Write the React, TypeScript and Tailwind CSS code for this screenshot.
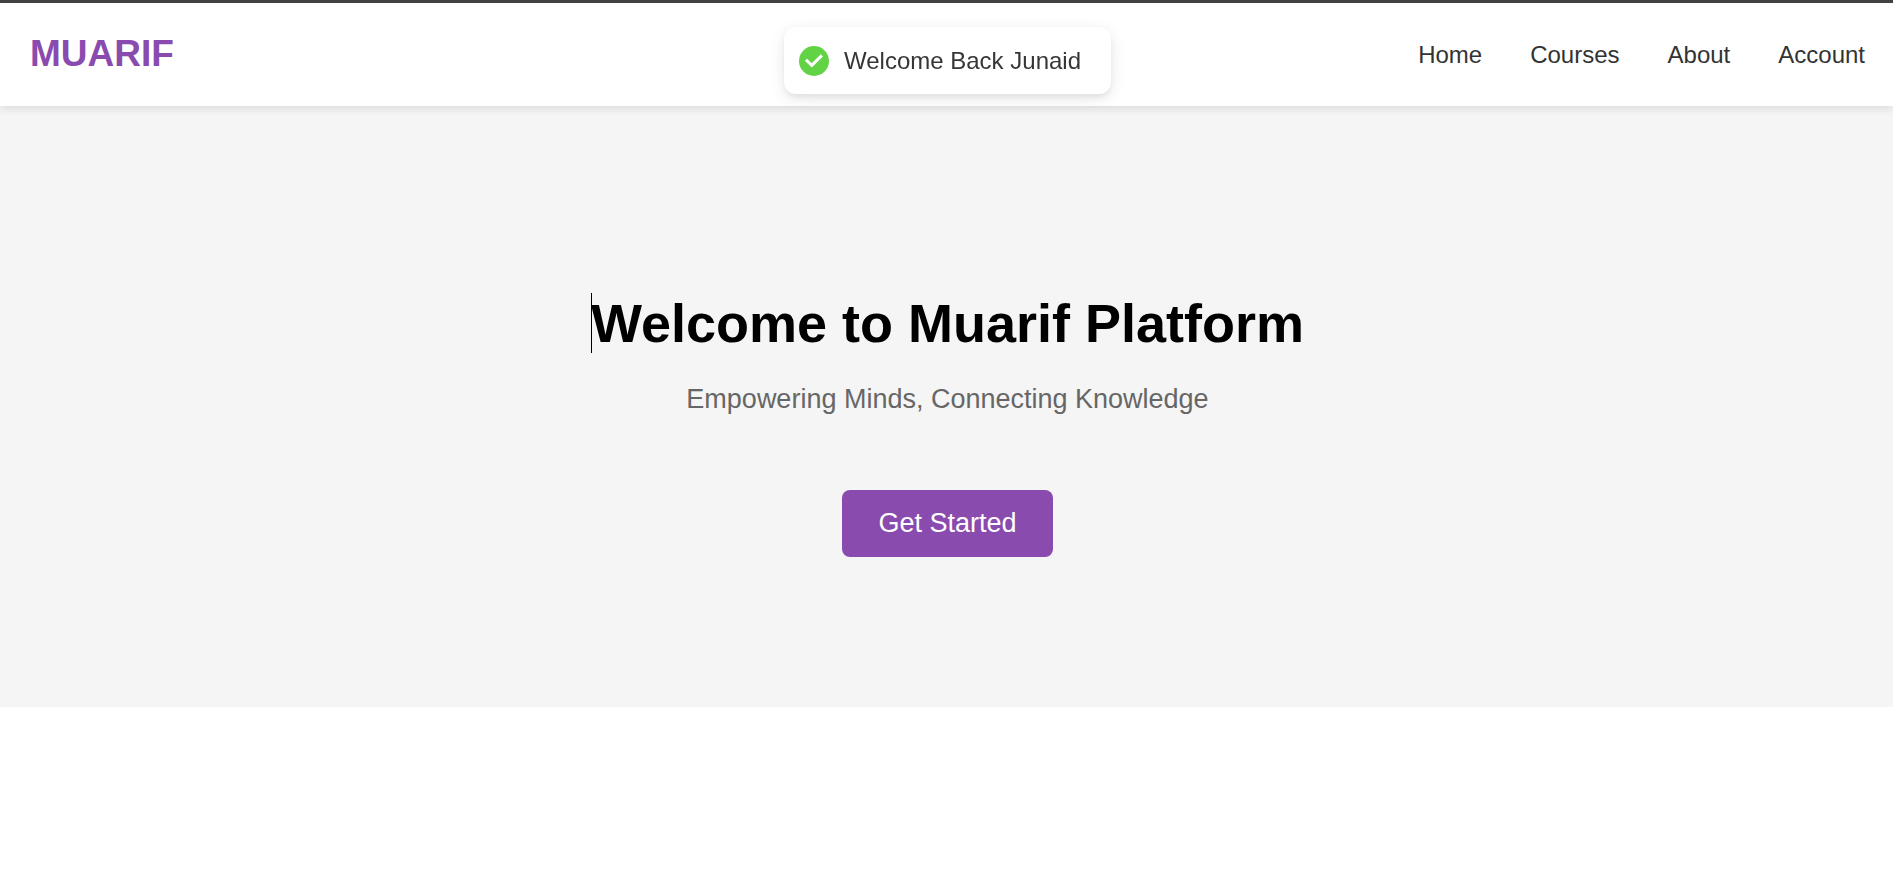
const links = ['Home', 'Courses', 'About', 'Account'];

function Toast({ message }: { message: string }) {
  return (
    <div className="pointer-events-none fixed inset-x-0 top-[27px] z-20 flex justify-center pl-0.5">
      <div
        role="status"
        className="flex items-center rounded-xl bg-white px-[15px] py-3 text-2xl leading-[43px] text-[#363636] shadow-[0_4px_15px_rgba(0,0,0,0.1),0_4px_5px_rgba(0,0,0,0.05)]"
      >
        <svg viewBox="0 0 30 30" className="size-[30px] shrink-0" aria-hidden="true">
          <circle cx="15" cy="15" r="15" fill="#61d345" />
          <path
            d="M8 14.8l4.8 4.6L21.8 10.4"
            fill="none"
            stroke="#fff"
            strokeWidth="3"
            strokeLinecap="square"
          />
        </svg>
        <p className="px-[15px] whitespace-nowrap">{message}</p>
      </div>
    </div>
  );
}

export default function App() {
  return (
    <div className="min-h-screen border-t-3 border-[#434143] bg-white font-['Liberation_Sans',Arial,sans-serif]">
      <header className="relative z-10 flex h-[103px] items-center justify-between bg-white pr-7 pl-[30px] shadow-[0_3px_8px_rgba(0,0,0,0.1)]">
        <a href="#" className="pb-0.5 text-[37px] leading-[44px] font-bold text-[#8a4baf]">
          MUARIF
        </a>
        <nav>
          <ul className="flex gap-12 text-2xl leading-7 text-[#333333]">
            {links.map((label) => (
              <li key={label}>
                <a href={`#${label.toLowerCase()}`}>{label}</a>
              </li>
            ))}
          </ul>
        </nav>
      </header>
      <main>
        <section className="flex flex-col items-center bg-[#f5f5f5] pt-[187px] pr-7 pb-[150px] pl-[30px] text-center">
          <h1 className="relative text-[54px] leading-[60px] font-bold text-black">
            <span className="absolute inset-y-0 left-0 w-px bg-black" aria-hidden="true" />
            Welcome to Muarif Platform
          </h1>
          <p className="mt-[30px] text-[27px] leading-8 text-[#666666]">
            Empowering Minds, Connecting Knowledge
          </p>
          <button
            type="button"
            className="mt-[75px] rounded-lg bg-[#8a4baf] px-9 py-[18px] text-[27px] leading-[31px] text-white"
          >
            Get Started
          </button>
        </section>
      </main>
      <Toast message="Welcome Back Junaid" />
    </div>
  );
}
